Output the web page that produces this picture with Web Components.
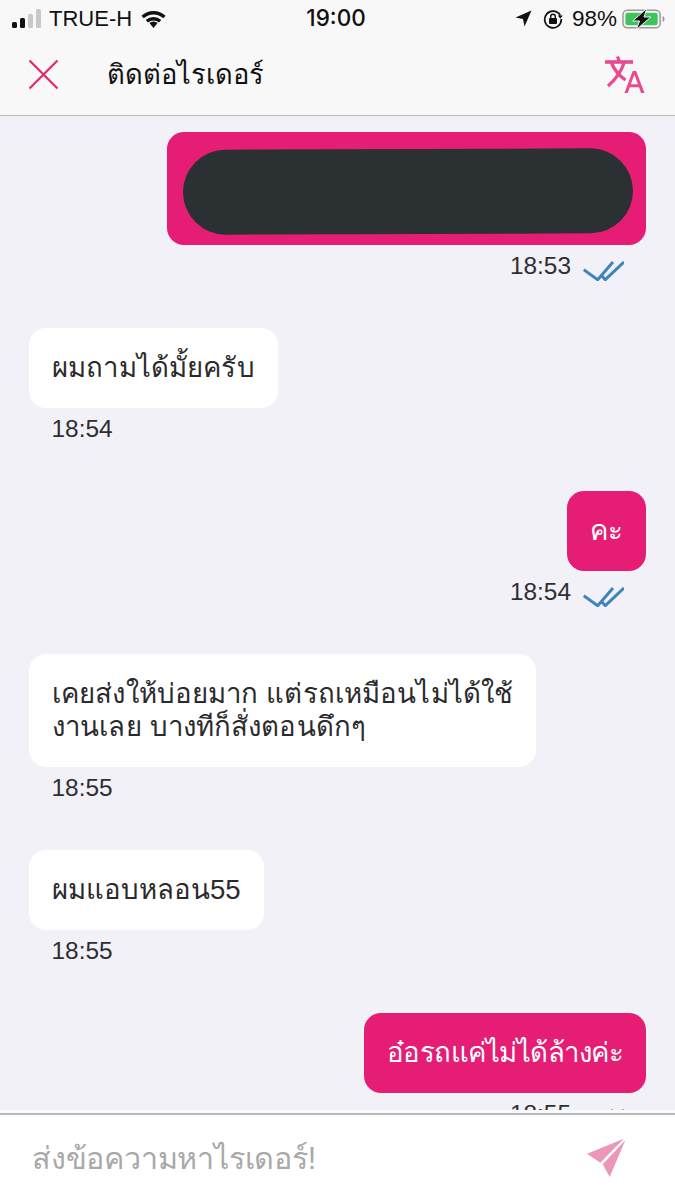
<!DOCTYPE html>
<html lang="th">
<head>
<meta charset="utf-8">
<title>Chat</title>
<style>
  html, body { margin: 0; height: 100%; }
  body {
    display: flex;
    flex-direction: column;
    width: 675px;
    height: 1200px;
    overflow: hidden;
    font-family: "Liberation Sans", "Noto Sans", "DejaVu Sans", sans-serif;
    background: #f2f1f8;
  }
</style>
</head>
<body>
<status-bar></status-bar>
<chat-header>ติดต่อไรเดอร์</chat-header>
<chat-list>
  <chat-message side="out" time="18:53"><redacted-block></redacted-block></chat-message>
  <chat-message side="in" time="18:54" style="--track:.15px">ผมถามได้มั้ยครับ</chat-message>
  <chat-message side="out" time="18:54">คะ</chat-message>
  <chat-message side="in" time="18:55" style="--track:.12px">เคยส่งให้บ่อยมาก แต่รถเหมือนไม่ได้ใช้<br>งานเลย บางทีก็สั่งตอนดึกๆ</chat-message>
  <chat-message side="in" time="18:55">ผมแอบหลอน55</chat-message>
  <chat-message side="out" time="18:55" style="--track:-.5px">อ๋อรถแค่ไม่ได้ล้างค่ะ</chat-message>
</chat-list>
<chat-input placeholder="ส่งข้อความหาไรเดอร์!"></chat-input>

<script>
const tplStatus = document.createElement('template');
tplStatus.innerHTML = `
  <style>
    :host {
      display: grid;
      grid-template-columns: 1fr auto 1fr;
      align-items: center;
      height: 37px;
      padding: 0 10px 0 12px;
      background: #f8f8f8;
      color: #111;
      font-size: 22px;
    }
    .left, .right { display: flex; align-items: center; }
    .left { gap: 8px; }
    .right { justify-content: flex-end; }
    .pct { font-size: 22.5px; }
    .time { font-family: Inter, "Liberation Sans", sans-serif; font-size: 22.5px; font-weight: 500; margin: -2px 0 0 -5px; }
    svg { display: block; }
  </style>
  <div class="left">
    <svg width="29" height="19" viewBox="0 0 29 19">
      <rect x="0" y="13" width="5" height="6" rx="1.5" fill="#111"/>
      <rect x="8" y="9" width="5" height="10" rx="1.5" fill="#111"/>
      <rect x="16" y="5" width="5" height="14" rx="1.5" fill="#c8c8c8"/>
      <rect x="24" y="0" width="5" height="19" rx="1.5" fill="#c8c8c8"/>
    </svg>
    <span>TRUE-H</span>
    <svg width="27" height="19" viewBox="0 0 28 20">
      <path d="M14 20l-4.300-5.200a6.500 6.500 0 0 1 8.600 0z" fill="#111"/>
      <path d="M2.500 8.500a17 17 0 0 1 23 0M7 13a10.500 10.500 0 0 1 14 0" fill="none" stroke="#111" stroke-width="3.600"/>
    </svg>
  </div>
  <div class="time">19:00</div>
  <div class="right">
    <svg width="17" height="17" viewBox="0 0 17 17" style="margin-right:11px">
      <path d="M16.500 .5L.5 7.500l7.500 1.500 1.500 7.500z" fill="#111"/>
    </svg>
    <svg width="20" height="20" viewBox="0 0 20 20" style="margin-right:9px">
      <path d="M17.300 6.500A8.300 8.300 0 1 0 18.300 10" fill="none" stroke="#111" stroke-width="1.700"/>
      <path d="M14.800 6.500h5l-2.500 3.200z" fill="#111"/>
      <rect x="6" y="9" width="8" height="6" rx="1" fill="#111"/>
      <path d="M7.700 9V7.500a2.300 2.300 0 0 1 4.600 0V9" fill="none" stroke="#111" stroke-width="1.400"/>
    </svg>
    <span class="pct">98%</span>
    <svg width="43" height="22" viewBox="0 0 44 22" style="margin-left:5px">
      <rect x="1" y="2" width="38" height="18" rx="4.500" fill="none" stroke="#999" stroke-width="1.500"/>
      <rect x="3.500" y="4.500" width="33" height="13" rx="2.500" fill="#3dc45c"/>
      <path d="M41.500 8v6c1.400-.4 2-1.600 2-3s-.6-2.600-2-3z" fill="#999"/>
      <path d="M25.500 0L11 13h7L14.500 22 29.500 9h-7z" fill="#111" stroke="#f8f8f8" stroke-width="1"/>
    </svg>
  </div>
`;

class StatusBar extends HTMLElement {
  constructor() {
    super();
    this.attachShadow({ mode: 'open' }).appendChild(tplStatus.content.cloneNode(true));
  }
}
customElements.define('status-bar', StatusBar);

const tplHeader = document.createElement('template');
tplHeader.innerHTML = `
  <style>
    :host {
      display: flex;
      align-items: center;
      height: 79px;
      padding: 0 30px 4px 28px;
      box-sizing: border-box;
      background: #f8f8f8;
      border-bottom: 1px solid #b9b9bd;
      color: #111;
      font-size: 27.3px;
    }
    .title { flex: 1; margin-left: 48px; }
    svg { display: block; }
  </style>
  <svg width="31" height="31" viewBox="0 0 31 31">
    <path d="M1.500 1.500l28 28M29.500 1.500l-28 28" stroke="#e4276f" stroke-width="2.200" fill="none"/>
  </svg>
  <div class="title"><slot></slot></div>
  <svg width="40" height="38" viewBox="0 0 40 38">
    <g fill="none" stroke="#e8498f">
      <path d="M0 7h28" stroke-width="3.600"/>
      <path d="M12.500 1.500l2 5.500M6.500 8c3 7 8 13 14 17M19 8c-3 9-8 16-16 23" stroke-width="3.200"/>
    </g>
    <path d="M19.500 38L27.700 16h3.400L39.500 38h-3.500l-2-5.700h-9.200l-2 5.700zM25.800 29.300h7.100L29.400 19.600z" fill="#e8498f"/>
  </svg>
`;

class ChatHeader extends HTMLElement {
  constructor() {
    super();
    this.attachShadow({ mode: 'open' }).appendChild(tplHeader.content.cloneNode(true));
  }
}
customElements.define('chat-header', ChatHeader);

const tplList = document.createElement('template');
tplList.innerHTML = `
  <style>
    :host {
      display: flex;
      flex-direction: column;
      flex: 1;
      min-height: 0;
      overflow: hidden;
      padding: 16px 29px 0;
      gap: 48px;
      background: #f2f1f8;
      border-bottom: 3px solid #fbfbfd;
      background-clip: padding-box;
    }
  </style>
  <slot></slot>
`;

class ChatList extends HTMLElement {
  constructor() {
    super();
    this.attachShadow({ mode: 'open' }).appendChild(tplList.content.cloneNode(true));
  }
}
customElements.define('chat-list', ChatList);

const tplMessage = document.createElement('template');
tplMessage.innerHTML = `
  <style>
    :host {
      display: flex;
      flex-direction: column;
      flex: none;
      align-items: flex-start;
      gap: 7px;
    }
    :host([side="out"]) { align-items: flex-end; }
    .bubble {
      padding: 23px 23px 24px;
      border-radius: 17px;
      background: #fff;
      color: #2b2b2e;
      font-size: 27.6px;
      line-height: 33px;
      letter-spacing: var(--track, 0);
    }
    :host([side="out"]) .bubble { background: #e51d74; color: #fff; }
    .meta {
      display: flex;
      align-items: center;
      height: 28px;
      color: #2e2e33;
      font-size: 24.4px;
      padding-left: 22.5px;
    }
    :host([side="out"]) .meta { padding: 0 22px 0 0; }
    .ticks { display: none; margin: 10px 0 0 12px; }
    :host([side="out"]) .ticks { display: block; }
  </style>
  <div class="bubble"><slot></slot></div>
  <div class="meta">
    <span id="time"></span>
    <svg class="ticks" width="41" height="20" viewBox="0 0 41 20">
      <path d="M.7 8.700l14 10L30 1M18.300 14.300l4 4.400L41 1" fill="none" stroke="#3f85bd" stroke-width="3"/>
    </svg>
  </div>
`;

class ChatMessage extends HTMLElement {
  constructor() {
    super();
    this.attachShadow({ mode: 'open' }).appendChild(tplMessage.content.cloneNode(true));
  }

  connectedCallback() {
    this.shadowRoot.querySelector('#time').textContent = this.getAttribute('time') || '';
  }
}
customElements.define('chat-message', ChatMessage);

const tplRedacted = document.createElement('template');
tplRedacted.innerHTML = `
  <style>
    :host {
      display: block;
      width: 450px;
      height: 85px;
      margin: -6px -10px -13px -7px;
      border-radius: 43px;
      background: #2b3033;
      transform: rotate(-.2deg);
    }
  </style>
`;

class RedactedBlock extends HTMLElement {
  constructor() {
    super();
    this.attachShadow({ mode: 'open' }).appendChild(tplRedacted.content.cloneNode(true));
  }
}
customElements.define('redacted-block', RedactedBlock);

const tplInput = document.createElement('template');
tplInput.innerHTML = `
  <style>
    :host {
      display: flex;
      align-items: center;
      justify-content: space-between;
      flex: none;
      height: 87px;
      padding: 0 49px 0 32px;
      box-sizing: border-box;
      background: #fff;
      border-top: 2px solid #b9b9b9;
      color: #a9a9a9;
      font-size: 30.5px;
      letter-spacing: -.2px;
    }
    svg { display: block; }
  </style>
  <span id="ph"></span>
  <svg width="39" height="39" viewBox="0 0 39 39">
    <path d="M0 15.700L36.700 .7 13.300 24.700z" fill="#ec97ba"/>
    <path d="M38.300 2.300L22.700 39 15.700 26.300z" fill="#ec97ba"/>
  </svg>
`;

class ChatInput extends HTMLElement {
  constructor() {
    super();
    this.attachShadow({ mode: 'open' }).appendChild(tplInput.content.cloneNode(true));
  }

  connectedCallback() {
    this.shadowRoot.querySelector('#ph').textContent = this.getAttribute('placeholder') || '';
  }
}
customElements.define('chat-input', ChatInput);
</script>
</body>
</html>
